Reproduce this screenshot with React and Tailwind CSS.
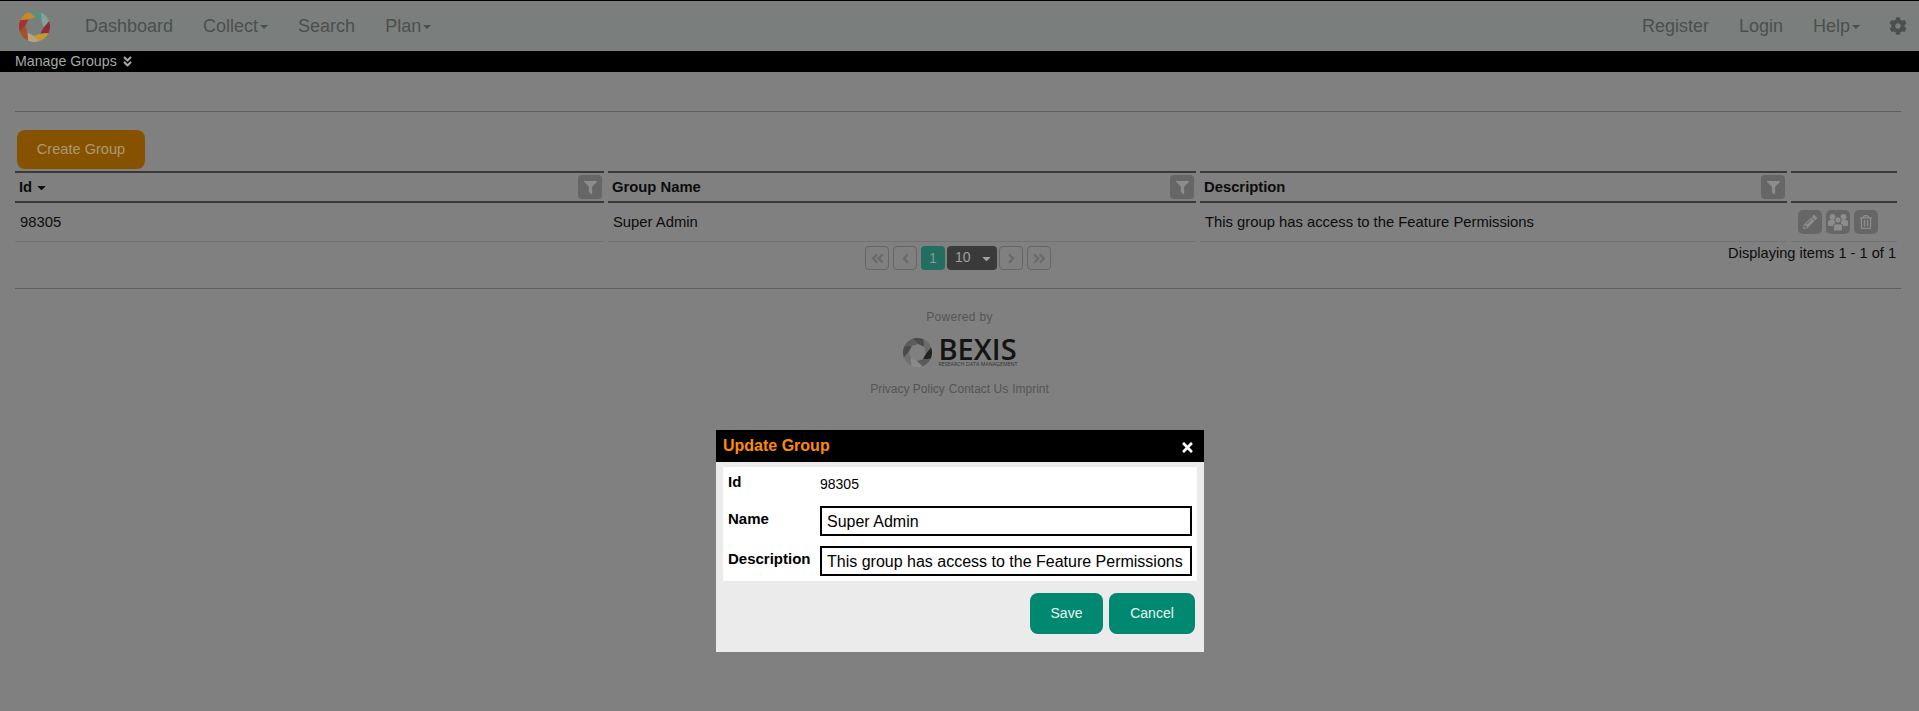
import React from "react";
import { FaFilter, FaPencilAlt, FaRegTrashAlt, FaCog, FaAngleDoubleDown, FaAngleDoubleLeft, FaAngleDoubleRight, FaAngleLeft, FaAngleRight, FaTimes, FaCaretDown } from "react-icons/fa";

function Ring({ size, colors }) {
  const pts = (a, r) => {
    const t = (a * Math.PI) / 180;
    return `${(16 + r * Math.cos(t)).toFixed(2)} ${(16 + r * Math.sin(t)).toFixed(2)}`;
  };
  const n = colors.length;
  const step = 360 / n;
  return (
    <svg width={size} height={size} viewBox="0 0 32 32">
      {colors.map((c, i) => {
        const a = -110 + i * step;
        const b = a + step;
        const d = `M${pts(a, 16)} A16 16 0 0 1 ${pts(b, 16)} L${pts(b + 26, 9.5)} L${pts(a + 26, 9.5)} Z`;
        return <path key={i} d={d} fill={c} />;
      })}
    </svg>
  );
}

function PeopleIcon() {
  return (
    <svg width="20" height="18" viewBox="0 0 20 18" fill="currentColor">
      <circle cx="4.5" cy="4" r="3" />
      <circle cx="15.5" cy="4" r="3" />
      <path d="M0 8.5 Q0 7 2 7 H6 Q7 7 7 8 V13 H1 Q0 13 0 12 Z" />
      <path d="M20 8.5 Q20 7 18 7 H14 Q13 7 13 8 V13 H19 Q20 13 20 12 Z" />
      <circle cx="10" cy="7" r="3.2" stroke="#666666" strokeWidth="1" />
      <path d="M5.5 13 Q5.5 10.8 8 10.8 H12 Q14.5 10.8 14.5 13 V18 H5.5 Z" stroke="#666666" strokeWidth="1" />
    </svg>
  );
}

function NavLink({ children, caret }) {
  return (
    <span className="flex items-center text-[18px] text-[#4c4f4e]">
      {children}
      {caret && <span className="ml-[2px] mt-[2px] border-x-[4px] border-t-[4px] border-x-transparent border-t-[#4c4f4e]" />}
    </span>
  );
}

function HeadCell({ children, filter = true }) {
  return (
    <div className="flex h-[32px] items-center justify-between border-y-2 border-[#3a3a3a] pl-[4px] pr-[2px] text-[14.8px] font-bold text-[#0c0c0c]">
      <span className="flex items-center gap-[3px]">{children}</span>
      {filter && (
        <span className="flex h-[24px] w-[24px] items-center justify-center rounded-[4px] bg-[#666666] text-[#8c8c8c]">
          <FaFilter size={13} />
        </span>
      )}
    </div>
  );
}

function RowCell({ children }) {
  return <div className="flex h-[39px] items-center border-b border-[#737373] pl-[5px] pt-[1px] text-[14.8px] text-[#0c0c0c]">{children}</div>;
}

function ActionBtn({ children }) {
  return <span className="flex h-[24px] w-[24px] items-center justify-center rounded-[5px] bg-[#666666] text-[#8c8c8c]">{children}</span>;
}

function PageBtn({ children }) {
  return <span className="flex h-[24px] w-[24px] items-center justify-center rounded-[4px] border border-[#666666] text-[#6a6a6a]">{children}</span>;
}

function Field({ label, children, labelClass }) {
  return (
    <div className="flex">
      <div className={`w-[92px] text-[15px] font-bold text-black ${labelClass}`}>{label}</div>
      {children}
    </div>
  );
}

export default function App() {
  return (
    <div className="relative h-[711px] overflow-hidden bg-[#808080] font-['Liberation_Sans',Arial,sans-serif]">
      <nav className="flex h-[51px] items-center border-t border-black bg-[#7a7f7d] pl-[19px] pr-[12px]">
        <Ring size={31} colors={["#5d8f7e", "#7fa598", "#8f2a3a", "#c49a2c", "#b8a47e", "#a5522c", "#a8322f", "#c68a24"]} />
        <div className="ml-[35px] flex gap-[30px]">
          <NavLink>Dashboard</NavLink>
          <NavLink caret>Collect</NavLink>
          <NavLink>Search</NavLink>
          <NavLink caret>Plan</NavLink>
        </div>
        <div className="ml-auto flex items-center gap-[30px]">
          <NavLink>Register</NavLink>
          <NavLink>Login</NavLink>
          <NavLink caret>Help</NavLink>
          <FaCog size={18} className="-ml-[1px] text-[#4c4f4e]" />
        </div>
      </nav>
      <div className="flex h-[21px] items-center gap-[4px] bg-black pl-[15px] text-[14.2px] text-[#a3aaa8]">
        Manage Groups <FaAngleDoubleDown size={13} />
      </div>
      <main className="px-[15px] pr-[18px]">
        <div className="mt-[39px] border-t border-[#5e5e5e]" />
        <button className="ml-[2px] mt-[18px] flex h-[39px] w-[128px] items-center justify-center rounded-[8px] bg-[#875200] text-[14.6px] text-[#a89a78]">
          Create Group
        </button>
        <div className="mt-[2px] grid grid-cols-[589px_588px_587px_106px] gap-x-[4px]">
          <HeadCell>Id <FaCaretDown size={13} /></HeadCell>
          <HeadCell>Group Name</HeadCell>
          <HeadCell>Description</HeadCell>
          <HeadCell filter={false} />
          <RowCell>98305</RowCell>
          <RowCell>Super Admin</RowCell>
          <RowCell>This group has access to the Feature Permissions</RowCell>
          <div className="flex h-[39px] items-center gap-[4px] border-b border-[#737373] pl-[7px]">
            <ActionBtn><FaPencilAlt size={14} /></ActionBtn>
            <ActionBtn><PeopleIcon /></ActionBtn>
            <ActionBtn><FaRegTrashAlt size={14} /></ActionBtn>
          </div>
        </div>
        <div className="relative mt-[4px] flex h-[24px] justify-center">
          <div className="flex items-center gap-[4px]">
            <PageBtn><FaAngleDoubleLeft size={15} /></PageBtn>
            <PageBtn><FaAngleLeft size={15} /></PageBtn>
            <span className="flex h-[24px] w-[24px] items-center justify-center rounded-[4px] bg-[#226e60] text-[14px] text-[#8a9a96]">1</span>
            <span className="-mx-[2px] flex h-[24px] w-[50px] items-center gap-[9px] rounded-[4px] bg-[#3a3a3a] pb-[2px] pl-[8px] text-[14px] text-[#a0a0a0]">
              10 <FaCaretDown size={13} className="mt-[2px]" />
            </span>
            <PageBtn><FaAngleRight size={15} /></PageBtn>
            <PageBtn><FaAngleDoubleRight size={15} /></PageBtn>
          </div>
          <span className="absolute right-[5px] -top-[3px] text-[14.6px] text-[#0c0c0c]">Displaying items 1 - 1 of 1</span>
        </div>
        <div className="mt-[18px] border-t border-[#5e5e5e]" />
        <footer className="flex flex-col items-center pl-[3px] text-[#555555]">
          <div className="mt-[19px] text-[12px] tracking-[0.3px]">Powered by</div>
          <div className="ml-[1px] mt-[11px] flex items-center gap-[7px]">
            <Ring size={29} colors={["#4a4a4a", "#6a6a6a", "#222222", "#5a5a5a", "#8a8a8a", "#707070", "#4a4a4a", "#5c5c5c"]} />
            <div className="flex flex-col text-[#141414]">
              <span className="font-['Open_Sans',sans-serif] text-[29px] leading-[24px] font-semibold">BEXIS</span>
              <span className="whitespace-nowrap font-['Open_Sans',sans-serif] text-[5.3px] leading-[6px] text-[#333333]">RESEARCH DATA MANAGEMENT</span>
            </div>
          </div>
          <div className="mt-[13px] flex gap-[4px] text-[12px]">
            <span>Privacy Policy</span>
            <span>Contact Us</span>
            <span>Imprint</span>
          </div>
        </footer>
      </main>

      <div className="absolute left-[716px] top-[430px] h-[222px] w-[488px] bg-[#ebebeb]">
        <div className="flex h-[32px] items-center justify-between bg-black pl-[7px] pr-[9px] text-[16px] font-bold text-[#ff8c00]">
          Update Group
          <FaTimes size={15} className="mt-[2px] text-white" />
        </div>
        <div className="mx-[7px] mt-[5px] h-[114px] bg-white pl-[5px] pr-[5px]">
          <Field label="Id" labelClass="pt-[4px]">
            <div className="pt-[7px] text-[14px] text-black">98305</div>
          </Field>
          <div className="mt-[11px]">
            <Field label="Name" labelClass="pt-[2px]">
              <input readOnly value="Super Admin" className="h-[30px] w-[372px] border-2 border-black bg-white px-[5px] pt-[2px] text-[16px] text-black outline-none" />
            </Field>
          </div>
          <div className="mt-[10px]">
            <Field label="Description" labelClass="pt-[2px]">
              <input readOnly value="This group has access to the Feature Permissions" className="h-[30px] w-[372px] border-2 border-black bg-white px-[5px] pt-[2px] text-[16px] text-black outline-none" />
            </Field>
          </div>
        </div>
        <div className="mr-[9px] mt-[12px] flex justify-end gap-[6px]">
          <button className="h-[41px] w-[73px] rounded-[8px] bg-[#008970] text-[14px] text-[#e8f5f2]">Save</button>
          <button className="h-[41px] w-[86px] rounded-[8px] bg-[#008970] text-[14px] text-[#e8f5f2]">Cancel</button>
        </div>
      </div>
    </div>
  );
}
